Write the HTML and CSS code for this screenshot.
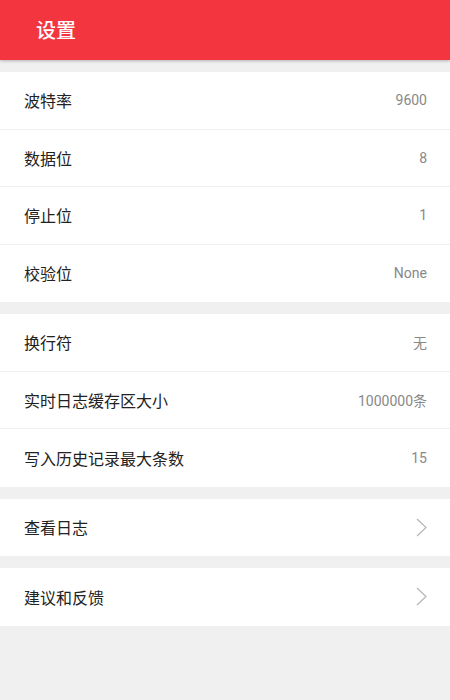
FILE: index.html
```html
<!DOCTYPE html>
<html lang="zh">
<head>
<meta charset="utf-8">
<link rel="stylesheet" href="styles.css">
</head>
<body>
<header class="bar"><h1 class="title">设置</h1></header>
<main class="page">
  <section class="group">
    <div class="row"><span class="label">波特率</span><span class="value">9600</span></div>
    <div class="row"><span class="label">数据位</span><span class="value">8</span></div>
    <div class="row"><span class="label">停止位</span><span class="value">1</span></div>
    <div class="row"><span class="label">校验位</span><span class="value">None</span></div>
  </section>
  <section class="group">
    <div class="row"><span class="label">换行符</span><span class="value">无</span></div>
    <div class="row"><span class="label">实时日志缓存区大小</span><span class="value">1000000条</span></div>
    <div class="row"><span class="label">写入历史记录最大条数</span><span class="value">15</span></div>
  </section>
  <section class="group">
    <div class="row"><span class="label">查看日志</span><svg class="chev" width="11" height="19" viewBox="0 0 11 19"><path d="M1 1 L10 9.5 L1 18" fill="none" stroke="#b5b5b5" stroke-width="1.2"/></svg></div>
  </section>
  <section class="group">
    <div class="row"><span class="label">建议和反馈</span><svg class="chev" width="11" height="19" viewBox="0 0 11 19"><path d="M1 1 L10 9.5 L1 18" fill="none" stroke="#b5b5b5" stroke-width="1.2"/></svg></div>
  </section>
</main>
</body>
</html>
```
FILE: styles.css
```css
html, body {
  margin: 0;
  padding: 0;
  background: #f0f0f0;
  font-family: "Noto Sans CJK SC", "Noto Sans", sans-serif;
}
.bar {
  height: 60px;
  background: #f2353f;
  box-shadow: 0 1px 3px rgba(0,0,0,0.25);
  display: flex;
  align-items: center;
  padding-left: 36px;
  position: relative;
  z-index: 1;
}
.title {
  margin: 0;
  color: #fff;
  font-size: 20px;
  font-weight: 500;
  line-height: 1;
}
.page {
  padding-top: 12px;
  display: flex;
  flex-direction: column;
  gap: 12px;
}
.group {
  background: #fff;
  display: flex;
  flex-direction: column;
}
.row {
  box-sizing: border-box;
  height: 57.5px;
  display: flex;
  align-items: center;
  justify-content: space-between;
  padding: 0 23px 0 24px;
  border-bottom: 1px solid #efefef;
}
.row:last-child { border-bottom: none; }
.label {
  font-size: 16px;
  color: #222;
}
.value {
  font-family: Roboto, "Noto Sans CJK SC", sans-serif;
  font-size: 14px;
  color: #888;
}
```
